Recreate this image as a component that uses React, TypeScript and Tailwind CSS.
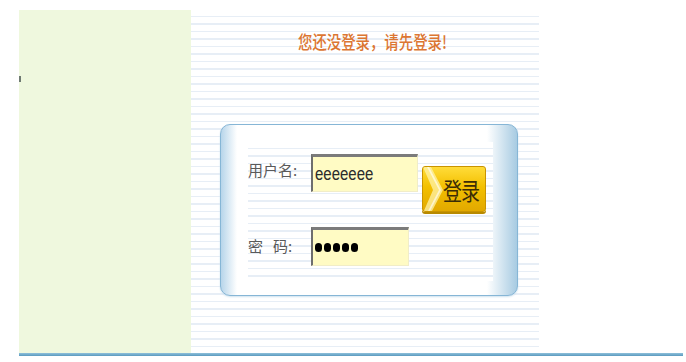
import React from 'react';

const stripes =
  'bg-[repeating-linear-gradient(to_bottom,#ffffff_0px,#ffffff_5.8px,#e7eef6_5.8px,#e7eef6_7.5px)]';

const inputBox =
  'bg-[#fffbc4] border-t-[3px] border-l-2 border-t-[#7b7b7b] border-l-[#6e6e6e] border-r border-b border-r-[#f1edc8] border-b-[#f1edc8] flex items-center pl-[2px]';

function LoginButton() {
  return (
    <button className="relative w-[64px] h-[46px] mt-[12px] rounded-[3px] border border-[#c99400] bg-[linear-gradient(to_bottom,#ffdc3a_0%,#f3c000_45%,#e2a900_100%)] shadow-[0_2px_0_#b88a00] overflow-hidden">
      {/* chevron decoration */}
      <svg className="absolute left-0 top-0" width="22" height="46" viewBox="0 0 22 46">
        <path d="M0 0 L8 0 L20 23 L8 46 L0 46 L10 23 Z" fill="#fff3a8" opacity="0.75" />
        <path d="M4 0 L6 0 L18 23 L6 46 L4 46 L16 23 Z" fill="#ffffff" opacity="0.6" />
      </svg>
      <span className="relative block pl-[14px] text-[19px] leading-none text-[#3b2c06] scale-y-125 font-['Noto_Sans_CJK_SC',serif] tracking-[-1px]">
        登录
      </span>
    </button>
  );
}

export default function App() {
  return (
    <div className="w-[686px] h-[362px] bg-white pt-[10px] font-['Liberation_Sans','Noto_Sans_CJK_SC',sans-serif]">
      <div className="flex pl-[19px]">
        {/* left column */}
        <div className="w-[172px] h-[343px] bg-[#eff8de] pt-[66px]">
          <div className="w-[2px] h-[6px] bg-[#6f7a72]" />
        </div>

        {/* main striped area */}
        <div className={`w-[348px] h-[343px] ${stripes} pt-[20px]`}>
          <div className="pl-[107px]">
            <span className="inline-block text-[14.4px] leading-[20px] font-medium text-[#dc7632] scale-y-125 font-['Noto_Sans_CJK_SC',sans-serif]">
              您还没登录，请先登录!
            </span>
          </div>

          {/* login panel */}
          <div className="ml-[29px] mt-[70px] w-[298px] h-[172px] rounded-[10px] border border-[#86b6d6] bg-[linear-gradient(to_right,#b7d5ea_0px,#ffffff_16px,#ffffff_calc(100%-30px),#a7cbe2_100%)] pt-[17px] pl-[27px] shadow-[0_1px_2px_#cfe2ef]">
            <div className={`w-[245px] h-[139px] ${stripes} flex pt-[12px]`}>
              <div className="flex flex-col">
                <div className="flex items-center h-[38px]">
                  <span className="w-[63px] text-[15px] text-[#5a5a5a] pb-[6px] font-['Noto_Sans_CJK_SC',sans-serif]">
                    用户名:
                  </span>
                  <div className={`w-[107px] h-[38px] ${inputBox}`}>
                    <span className="inline-block text-[15px] text-[#2b2b2b] scale-y-125">eeeeeee</span>
                  </div>
                </div>
                <div className="flex items-center h-[39px] mt-[35px]">
                  <span className="w-[63px] flex text-[15px] text-[#5a5a5a] font-['Noto_Sans_CJK_SC',sans-serif]">
                    <span>密</span>
                    <span className="ml-[10px]">码:</span>
                  </span>
                  <div className={`w-[98px] h-[39px] gap-[2px] ${inputBox}`}>
                    {[0, 1, 2, 3, 4].map((i) => (
                      <span key={i} className="w-[7px] h-[9px] rounded-full bg-black" />
                    ))}
                  </div>
                </div>
              </div>
              <div className="ml-[4px]">
                <LoginButton />
              </div>
            </div>
          </div>
        </div>
      </div>

      {/* bottom rule */}
      <div className="ml-[19px] w-[664px] h-[3px] bg-[linear-gradient(to_bottom,#8fc0da,#5a9abf)]" />
    </div>
  );
}
